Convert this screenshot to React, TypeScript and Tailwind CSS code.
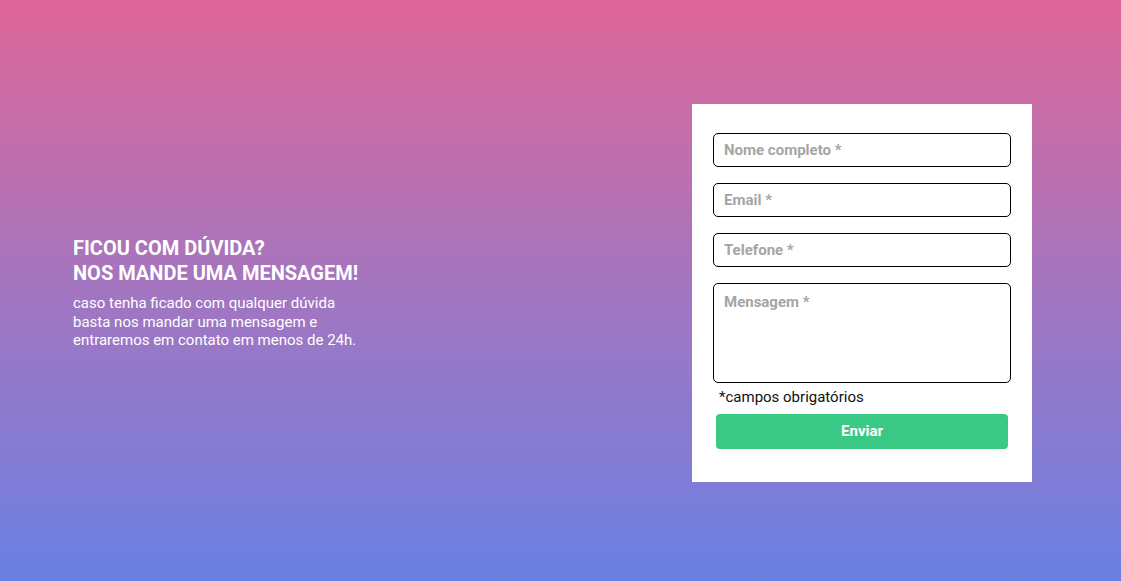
import React from "react";

export default function App() {
  return (
    <div
      className="w-full h-[581px] flex items-center bg-gradient-to-b from-[#dd6497] via-[#a375c0] to-[#687fe3] pl-[73px] pr-[89px] pt-[5px]"
      style={{ fontFamily: "Roboto, 'Liberation Sans', sans-serif" }}
    >
      <div className="text-white">
        <h1 className="font-bold text-[20px] leading-[25px] uppercase">
          Ficou com dúvida?
          <br />
          Nos mande uma mensagem!
        </h1>
        <p className="mt-[8px] text-[15px] leading-[18.5px]">
          caso tenha ficado com qualquer dúvida
          <br />
          basta nos mandar uma mensagem e
          <br />
          entraremos em contato em menos de 24h.
        </p>
      </div>
      <div className="ml-auto w-[340px] h-[378px] bg-white pt-[29px] px-[21px] -mt-[1px]">
        <form className="flex flex-col" onSubmit={(e) => e.preventDefault()}>
          <input
            className="h-[34px] w-[298px] border border-black rounded-[5px] px-[10px] pt-[1px] text-[15px] font-bold placeholder:text-[#a5a5a5] outline-none"
            placeholder="Nome completo *"
          />
          <input
            className="mt-[16px] h-[34px] w-[298px] border border-black rounded-[5px] px-[10px] pt-[1px] text-[15px] font-bold placeholder:text-[#a5a5a5] outline-none"
            placeholder="Email *"
          />
          <input
            className="mt-[16px] h-[34px] w-[298px] border border-black rounded-[5px] px-[10px] pt-[1px] text-[15px] font-bold placeholder:text-[#a5a5a5] outline-none"
            placeholder="Telefone *"
          />
          <textarea
            className="mt-[16px] h-[100px] w-[298px] border border-black rounded-[5px] px-[10px] py-[7px] text-[15px] font-bold placeholder:text-[#a5a5a5] outline-none resize-none"
            placeholder="Mensagem *"
          />
          <span className="pl-[6px] mt-[5px] text-[15px] leading-[19px] text-[#111]">
            *campos obrigatórios
          </span>
          <button
            type="submit"
            className="mt-[7px] ml-[3px] w-[292px] h-[35px] rounded-[4px] bg-[#3ac985] text-white font-bold text-[15px]"
          >
            Enviar
          </button>
        </form>
      </div>
    </div>
  );
}
